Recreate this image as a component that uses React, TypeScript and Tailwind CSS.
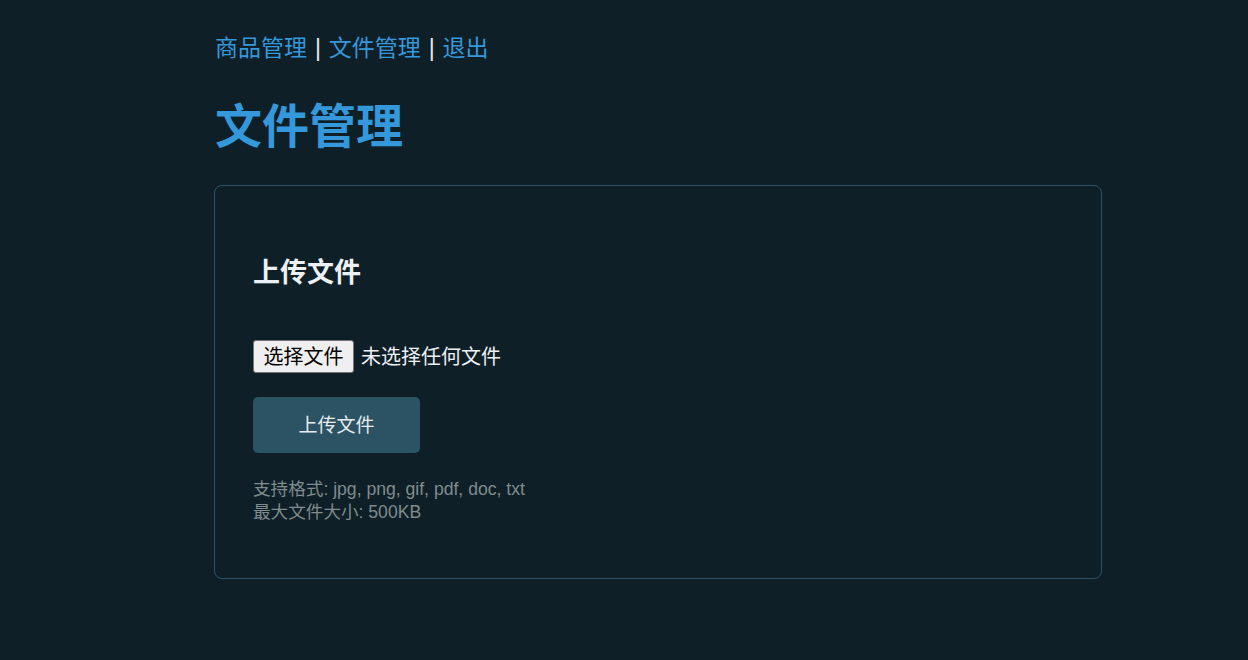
import React from 'react';

const FONT = '"Liberation Sans", "Noto Sans CJK SC", sans-serif';

export default function App() {
  return (
    <div className="min-h-[660px] w-full bg-[#0f1f27] text-[#e8ecef]" style={{ fontFamily: FONT }}>
      <div className="pl-[214px] pt-[30px] w-[1102px]">
        {/* top nav */}
        <nav className="text-[23px] leading-[36px] pl-[1px]">
          <a href="#" className="text-[#3498db]">商品管理</a>
          <span className="mx-[1.5px] text-[#e8ecef]"> | </span>
          <a href="#" className="text-[#3498db]">文件管理</a>
          <span className="mx-[1.5px] text-[#e8ecef]"> | </span>
          <a href="#" className="text-[#3498db]">退出</a>
        </nav>

        <h1 className="mt-[32px] text-[47px] leading-[58px] font-bold text-[#3498db] pl-[1px]">文件管理</h1>

        {/* upload card */}
        <div className="mt-[29px] w-[888px] rounded-lg border border-[#2a5465] pl-[38px] pt-[70px] pb-[54px]">
          <h2 className="text-[27px] leading-[34px] font-bold text-[#eef1f3]">上传文件</h2>

          <div className="mt-[50px] flex items-center gap-[7px]">
            <button
              type="button"
              className="h-[33px] w-[101px] rounded-[3px] border border-[#767676] bg-[#efefef] text-[20px] leading-none text-black"
            >
              选择文件
            </button>
            <span className="text-[20px] text-[#eef1f3]">未选择任何文件</span>
          </div>

          <button
            type="button"
            className="mt-[24px] h-[56px] w-[167px] rounded-[5px] bg-[#2c5364] text-[19px] text-[#e8ecef] pt-[3px]"
          >
            上传文件
          </button>

          <div className="mt-[25px] text-[17.6px] leading-[23px] text-[#7f8c8d]">
            <p>支持格式: jpg, png, gif, pdf, doc, txt</p>
            <p>最大文件大小: 500KB</p>
          </div>
        </div>
      </div>
    </div>
  );
}
